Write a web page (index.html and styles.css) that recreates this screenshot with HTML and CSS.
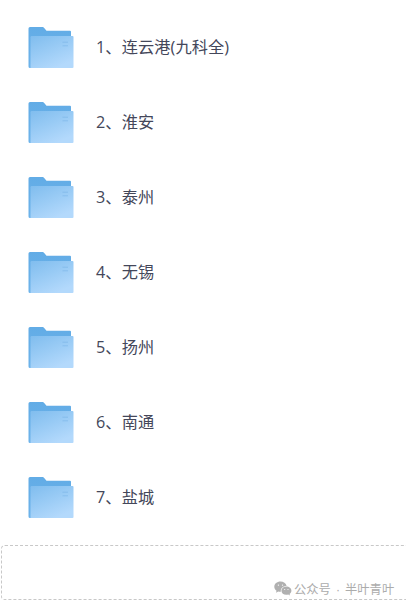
FILE: index.html
```
<!DOCTYPE html>
<html lang="zh-CN">

<head>
    <meta charset="UTF-8">
    <meta name="viewport" content="width=device-width, initial-scale=1.0">
    <title>文件列表</title>
    <link rel="stylesheet" href="styles.css">
</head>

<body>
    <!-- Carpeta compartida por todas las filas -->
    <svg class="defs" width="0" height="0">
        <defs>
            <linearGradient id="front" x1="0" y1="0" x2="0.6" y2="1">
                <stop offset="0" stop-color="#80bdee" />
                <stop offset="0.5" stop-color="#99cbf5" />
                <stop offset="1" stop-color="#b3d9fc" />
            </linearGradient>
            <linearGradient id="back" x1="0" y1="0" x2="0" y2="1">
                <stop offset="0" stop-color="#62ace6" />
                <stop offset="1" stop-color="#6db3ea" />
            </linearGradient>
            <symbol id="folder" viewBox="0 0 46 42">
                <path fill="url(#back)" d="M2 0H14.500Q15.500 0 16.200 .900L18.500 3.800H42Q43 3.800 43 4.800V41H2Q.500 41 .500 39.500V1.500Q.500 0 2 0Z" />
                <path fill="url(#front)" d="M3.600 9H44.500Q45.500 9 45.500 10V40Q45.500 41 44.500 41H2.500V10.200Q2.500 9 3.600 9Z" />
                <path fill="none" stroke="#79b5e8" stroke-width=".8" opacity=".8" d="M34.500 15.200H40M34.500 18.800H40" />
            </symbol>
        </defs>
    </svg>

    <ul class="file-list">
        <li class="file"><svg class="icon"><use href="#folder" /></svg><span class="name">1、连云港(九科全)</span></li>
        <li class="file"><svg class="icon"><use href="#folder" /></svg><span class="name">2、淮安</span></li>
        <li class="file"><svg class="icon"><use href="#folder" /></svg><span class="name">3、泰州</span></li>
        <li class="file"><svg class="icon"><use href="#folder" /></svg><span class="name">4、无锡</span></li>
        <li class="file"><svg class="icon"><use href="#folder" /></svg><span class="name">5、扬州</span></li>
        <li class="file"><svg class="icon"><use href="#folder" /></svg><span class="name">6、南通</span></li>
        <li class="file"><svg class="icon"><use href="#folder" /></svg><span class="name">7、盐城</span></li>
    </ul>

    <div class="footer-box">
        <svg class="wechat" viewBox="0 0 18 15">
            <path fill="#b0b0b0" d="M6.500 .500C2.900 .500 .300 2.800 .300 5.700C.300 7.400 1.200 8.800 2.500 9.700L2 11.700L4.300 10.500Q5.400 10.800 6.900 10.700C6.200 7.300 9 4.800 12.600 4.900C12 2.300 9.500 .500 6.500 .500Z" />
            <path fill="#b0b0b0" d="M12.300 5.600C9.500 5.600 7.400 7.400 7.400 9.700C7.400 12 9.500 13.800 12.300 13.800Q13.400 13.800 14.200 13.500L16 14.500L15.600 12.900C16.700 12.100 17.400 11 17.400 9.700C17.400 7.400 15.200 5.600 12.300 5.600Z" />
            <g fill="#fff">
                <circle cx="4.400" cy="4.100" r=".7" />
                <circle cx="8.500" cy="4.100" r=".7" />
                <circle cx="10.700" cy="8.500" r=".6" />
                <circle cx="14" cy="8.500" r=".6" />
            </g>
        </svg>
        <span class="account">公众号 · 半叶青叶</span>
    </div>
</body>

</html>
```
FILE: styles.css
```
body {
    margin: 0;
    background: #fff;
    font-family: "Open Sans", "Noto Sans CJK SC", sans-serif;
    overflow: hidden;
}

.defs {
    display: block;
}

.file-list {
    list-style: none;
    margin: 0;
    padding: 10px 0 0 28px;
}

.file {
    display: flex;
    align-items: center;
    height: 75px;
}

.icon {
    width: 46px;
    height: 42px;
    margin-right: 22px;
}

.name {
    padding-bottom: 2px;
    font-size: 16.2px;
    line-height: 24px;
    letter-spacing: 0.1px;
    color: #44475a;
    white-space: nowrap;
}

.footer-box {
    display: flex;
    align-items: flex-end;
    box-sizing: border-box;
    width: 420px;
    height: 55px;
    margin: 10px 0 0 1px;
    padding: 0 0 1px 272px;
    border: 1px dashed #c8c8c8;
    border-radius: 4px;
}

.wechat {
    width: 18px;
    height: 15px;
    margin: 0 2px 2px 0;
}

.account {
    font-family: "Liberation Sans", "Noto Sans CJK SC", sans-serif;
    font-size: 12.3px;
    line-height: 16px;
    word-spacing: 1.6px;
    color: #acacac;
    white-space: nowrap;
}
```
